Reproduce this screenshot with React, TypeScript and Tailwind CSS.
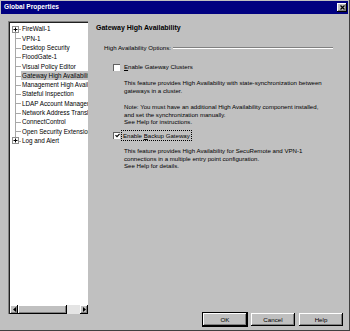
import React from 'react';

const treeItems = [
  { label: 'FireWall-1', plus: true },
  { label: 'VPN-1' },
  { label: 'Desktop Security' },
  { label: 'FloodGate-1' },
  { label: 'Visual Policy Editor' },
  { label: 'Gateway High Availability', selected: true },
  { label: 'Management High Availability' },
  { label: 'Stateful Inspection' },
  { label: 'LDAP Account Management' },
  { label: 'Network Address Translation' },
  { label: 'ConnectControl' },
  { label: 'Open Security Extension' },
  { label: 'Log and Alert', plus: true },
];

const raised = 'shadow-[inset_-1px_-1px_#000,inset_1px_1px_#fff,inset_-2px_-2px_#808080]';

const Checkbox: React.FC<{ checked?: boolean }> = ({ checked }) => (
  <div className="w-[7px] h-[7px] bg-white border-t border-l border-[#606060] border-r-white border-b-white shrink-0 flex items-center justify-center">
    {checked && (
      <svg width="5" height="5" viewBox="0 0 5 5">
        <path d="M0.5 2.2 L2 3.7 L4.6 0.8" stroke="#000" strokeWidth="1.2" fill="none" />
      </svg>
    )}
  </div>
);

const Button: React.FC<{ label: string; primary?: boolean }> = ({ label, primary }) => (
  <div
    className={`w-[44px] h-[13px] flex items-center justify-center text-[6.2px] bg-[#c0c0c0] ${raised} ${
      primary ? 'outline outline-1 outline-black' : ''
    }`}
  >
    {label}
  </div>
);

export default function App() {
  return (
    <div className="w-[350px] h-[331px] bg-[#c0c0c0] border-r border-b border-[#404040] flex flex-col font-['Liberation_Sans',Arial,sans-serif] text-black overflow-hidden">
      {/* title bar */}
      <div className="mx-[1px] mt-[1px] h-[13px] bg-[#000080] flex items-center justify-between pl-[3px] pr-[1px]">
        <span className="text-white font-bold text-[6.6px] leading-none">Global Properties</span>
        <div className={`w-[10px] h-[9px] bg-[#c0c0c0] flex items-center justify-center ${raised}`}>
          <svg width="5" height="5" viewBox="0 0 5 5">
            <path d="M0.5 0.5 L4.5 4.5 M4.5 0.5 L0.5 4.5" stroke="#000" strokeWidth="1.2" />
          </svg>
        </div>
      </div>

      <div className="flex pt-[7px]">
        {/* tree */}
        <div className="ml-[8px] w-[80px] h-[293px] border-t border-l border-[#808080] border-r-white border-b-white">
          <div className="h-full border-t border-l border-[#202020] border-r-[#dfdfdf] border-b-[#dfdfdf] bg-white flex flex-col">
            <div className="flex-1 pt-[1.4px] overflow-hidden whitespace-nowrap text-[6.3px]">
              {treeItems.map((item, i) => {
                const last = i === treeItems.length - 1;
                return (
                  <div key={item.label} className="flex h-[9.31px] items-stretch">
                    <div className="relative w-[11px] shrink-0">
                      <div
                        className={`absolute left-[5px] w-px bg-[#a8a8a8] ${
                          i === 0 ? 'top-1/2 bottom-0' : last ? 'top-0 bottom-1/2' : 'top-0 bottom-0'
                        }`}
                      />
                      <div className="absolute left-[5px] top-1/2 h-px w-[6px] bg-[#a8a8a8]" />
                      {item.plus && (
                        <div className="absolute left-[2px] top-[1.2px] w-[7px] h-[7px] border border-[#909090] bg-white flex items-center justify-center">
                          <svg width="5" height="5" viewBox="0 0 5 5">
                            <path d="M0.5 2.5 H4.5 M2.5 0.5 V4.5" stroke="#000" strokeWidth="1" />
                          </svg>
                        </div>
                      )}
                    </div>
                    <span
                      className={`flex items-center px-[1px] ${item.selected ? 'bg-[#c0c0c0]' : ''}`}
                    >
                      {item.label}
                    </span>
                  </div>
                );
              })}
            </div>
            {/* horizontal scrollbar */}
            <div className="h-[9px] flex bg-[#e4e4e4]">
              <div className={`w-[8px] h-full bg-[#c0c0c0] flex items-center justify-center ${raised}`}>
                <svg width="3" height="5" viewBox="0 0 3 5">
                  <path d="M3 0 L0 2.5 L3 5 Z" fill="#000" />
                </svg>
              </div>
              <div className={`w-[49px] h-full bg-[#c0c0c0] ${raised}`} />
              <div className="flex-1" />
              <div className={`w-[8px] h-full bg-[#c0c0c0] flex items-center justify-center ${raised}`}>
                <svg width="3" height="5" viewBox="0 0 3 5">
                  <path d="M0 0 L3 2.5 L0 5 Z" fill="#000" />
                </svg>
              </div>
            </div>
          </div>
        </div>

        {/* right panel */}
        <div className="flex-1 h-[305px] flex flex-col text-[6.1px] leading-[7.5px]">
          <div className="mt-[3px] pl-[8px] h-[8px] leading-[8px] font-bold text-[7px]">
            Gateway High Availability
          </div>
          <div className="mt-[12px] pl-[16px] pr-[16px] h-[8px] flex items-center gap-[2px]">
            <span className="whitespace-nowrap">High Availability Options:</span>
            <div className="flex-1 h-[2px] border-t border-[#808080] border-b border-b-white" />
          </div>
          <div className="mt-[11px] pl-[25px] h-[8px] flex items-center gap-[4px]">
            <Checkbox />
            <span>
              <u>E</u>nable Gateway Clusters
            </span>
          </div>
          <div className="mt-[8.25px] pl-[36px]">
            This feature provides High Availability with state-synchronization between
            <br />
            gateways in a cluster.
          </div>
          <div className="mt-[9px] pl-[36px]">
            Note: You must have an additional High Availability component installed,
            <br />
            and set the synchronization manually.
            <br />
            See Help for instructions.
          </div>
          <div className="mt-[5.25px] pl-[25px] h-[8px] flex items-center gap-[2px]">
            <Checkbox checked />
            <div className="outline outline-1 outline-dotted outline-black px-[1px] leading-[9px] whitespace-nowrap">
              Enable <u>B</u>ackup Gateway
            </div>
          </div>
          <div className="mt-[8.25px] pl-[36px]">
            This feature provides High Availability for SecuRemote and VPN-1
            <br />
            connections in a multiple entry point configuration.
            <br />
            See Help for details.
          </div>

          <div className="mt-auto flex justify-end gap-[4px] pr-[6px]">
            <Button label="OK" primary />
            <Button label="Cancel" />
            <Button label="Help" />
          </div>
        </div>
      </div>
    </div>
  );
}
